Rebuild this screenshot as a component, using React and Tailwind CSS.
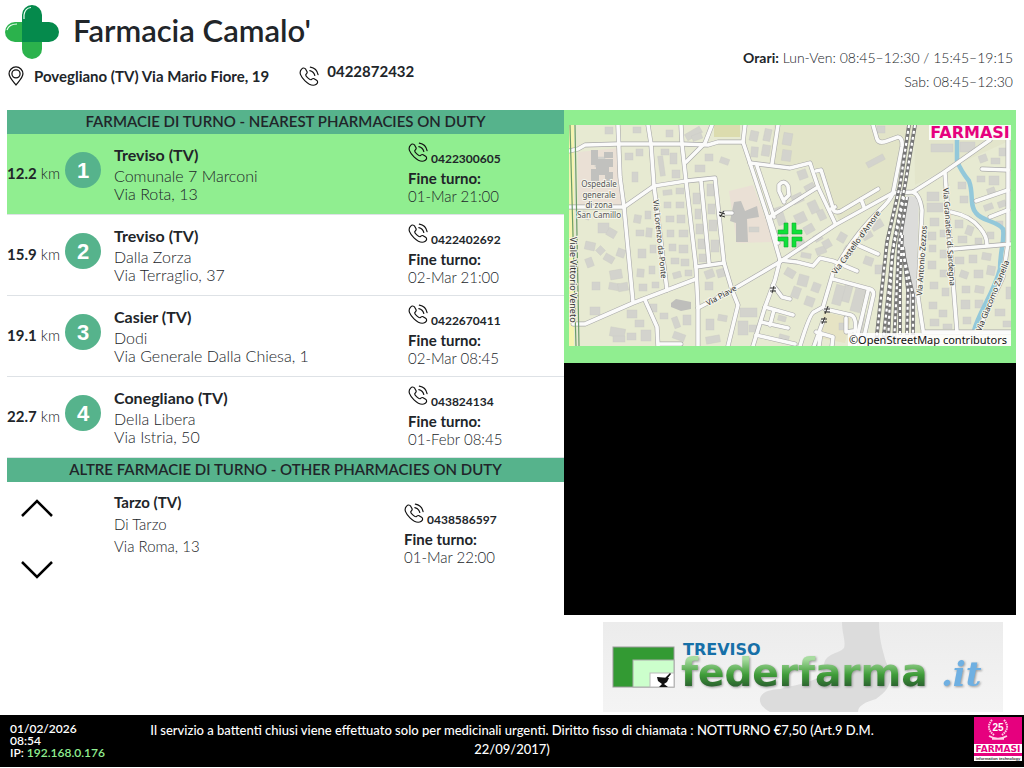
import { useState } from "react";

const nearest = [
  { km: "12.2", city: "Treviso (TV)", name: "Comunale 7 Marconi", street: "Via Rota, 13", phone: "0422300605", until: "01-Mar 21:00" },
  { km: "15.9", city: "Treviso (TV)", name: "Dalla Zorza", street: "Via Terraglio, 37", phone: "0422402692", until: "02-Mar 21:00" },
  { km: "19.1", city: "Casier (TV)", name: "Dodi", street: "Via Generale Dalla Chiesa, 1", phone: "0422670411", until: "02-Mar 08:45" },
  { km: "22.7", city: "Conegliano (TV)", name: "Della Libera", street: "Via Istria, 50", phone: "043824134", until: "01-Febr 08:45" },
];

const others = [
  { city: "Tarzo (TV)", name: "Di Tarzo", street: "Via Roma, 13", phone: "0438586597", until: "01-Mar 22:00" },
];

// Map data, in map units (442 x 221)
const roads = [
  "M0 26L9 24L16 20L49 19H113L139 20L149 17H174",
  "M49 0L51 52L55 82L64 177",
  "M79 0L82 19L85 61L98 165",
  "M112 0L113 19L117 56L127 142L129 183V221",
  "M143 0L136 18L117 37",
  "M4 199H16L64 178L127 154",
  "M0 82H55L85 61L117 56L146 53L155 138L163 165L169 180L159 221",
  "M132 56L140 138",
  "M127 142L155 138",
  "M76 175L88 202L89 221M89 219H112",
  "M176 0L174 17L181 38L199 93L211 135",
  "M181 38L221 43L241 38L249 62L266 98",
  "M209 0L203 39",
  "M188 41L205 92",
  "M199 93L225 77L249 62",
  "M215 77L210 66V60Q215 54 219 61L220 70L216 74",
  "M201 93L209 118",
  "M211 135L206 155L196 182L184 221",
  "M204 160L213 172L221 174",
  "M196 182L224 190M192 197L219 203M205 185L201 200M187 210L226 219",
  "M129 183L163 165L209 138L266 100L324 68L344 67L374 48L421 15",
  "M304 0L308 14Q310 19 318 16L329 12Q334 13 333 22L324 68Q321 76 311 85Q283 112 264 148L254 182L245 187Q241 188 231 221",
  "M211 135L228 137L244 141L251 133L264 136L288 146",
  "M247 46L252 45L265 86Q268 88 272 86L309 64M262 84L266 82M292 74L295 82",
  "M284 118L309 129",
  "M264 154L301 164Q306 166 304 172L293 221M299 166L286 221",
  "M256 184L282 190Q288 192 286 207M277 193V207L284 206M254 196L245 221M247 207L264 212L263 221M252 208L250 221",
  "M344 67Q351 70 353 85L349 172L354 205",
  "M354 207H442",
  "M376 48L381 118L388 207",
  "M382 87Q402 91 411 103Q418 111 418 120",
  "M384 124L442 119",
  "M439 12V118L434 152L408 208",
  "M413 44L439 45M407 76L439 65M421 92L439 85",
  "M155 88H163",
];

const buildings = [
  [26, 32, 10, 10, 0],
  [13, 87, 8, 7, 20], [29, 98, 11, 10, 0], [38, 104, 9, 8, 30], [16, 117, 10, 8, 12], [28, 122, 7, 7, 45],
  [35, 130, 10, 7, 30], [48, 124, 8, 8, 20], [17, 133, 7, 9, -20], [41, 145, 12, 9, -10], [23, 157, 8, 8, 0],
  [40, 158, 10, 7, 10], [49, 158, 10, 8, -10], [21, 182, 10, 8, 0], [41, 203, 15, 9, 10], [44, 211, 12, 6, 0],
  [56, 28, 8, 7, 0], [67, 24, 7, 7, 0], [63, 47, 6, 10, 0], [90, 31, 5, 20, -8], [92, 24, 8, 6, 0], [101, 28, 7, 11, 0],
  [103, 45, 8, 8, 0], [65, 90, 7, 8, 10], [76, 86, 6, 8, 0], [67, 105, 8, 6, 0], [77, 103, 6, 9, 5],
  [69, 124, 8, 9, 0], [81, 120, 6, 8, 0], [68, 144, 7, 8, 5], [80, 141, 6, 8, 0], [70, 159, 8, 7, 0], [83, 157, 7, 6, 0],
  [94, 65, 9, 5, -5], [107, 63, 8, 6, 0], [95, 77, 7, 6, 0], [107, 77, 8, 6, 0], [97, 91, 8, 6, 0], [108, 90, 8, 8, 0],
  [98, 105, 7, 7, 0], [110, 105, 9, 7, 0], [100, 119, 7, 7, 0], [110, 120, 9, 8, 0], [102, 133, 8, 6, 0], [112, 134, 8, 7, 0],
  [104, 147, 8, 6, -15], [116, 145, 7, 6, 0], [124, 68, 7, 11, 0], [126, 84, 6, 10, 0], [127, 99, 7, 10, 0], [129, 114, 7, 10, 0],
  [130, 129, 7, 8, 0], [138, 59, 7, 12, 0], [139, 79, 7, 10, 0], [140, 95, 8, 11, 0], [142, 115, 8, 12, 0],
  [81, 179, 7, 8, 0], [91, 188, 8, 6, 0], [104, 192, 6, 11, -20], [114, 190, 8, 10, 0], [104, 208, 12, 7, 20],
  [58, 185, 10, 8, 0], [66, 195, 9, 7, 0], [72, 205, 10, 11, 0], [58, 208, 9, 7, 0], [136, 145, 9, 8, -20], [148, 144, 8, 8, -15],
  [136, 157, 8, 8, 0], [171, 183, 17, 9, 0], [169, 196, 10, 14, 0], [180, 200, 8, 7, 0], [137, 194, 8, 11, 0], [149, 190, 9, 6, 10],
  [137, 211, 14, 7, -10], [180, 102, 10, 5, 0],
  [116, 5, 17, 7, -30], [123, 9, 10, 6, -20], [36, 2, 8, 7, 0], [64, 2, 8, 6, 0], [97, 5, 7, 7, 0],
  [181, 6, 8, 10, 12], [195, 4, 7, 12, 12], [182, 22, 7, 10, 5], [193, 20, 8, 11, 10], [214, 8, 9, 12, 10], [213, 25, 9, 11, 8],
  [151, 33, 9, 6, 20], [136, 29, 8, 7, 0], [126, 40, 10, 7, 0], [207, 82, 8, 18, -18], [212, 104, 6, 12, -18],
  [229, 45, 9, 9, -20], [236, 59, 10, 8, -28], [223, 69, 11, 9, -25], [240, 76, 9, 12, -25], [226, 88, 11, 10, -25], [249, 85, 7, 10, -25],
  [235, 100, 10, 8, -30], [245, 109, 8, 7, -30], [228, 116, 9, 9, -30], [297, 33, 19, 6, -28], [308, 1, 8, 7, 0],
  [247, 122, 10, 7, -20], [269, 108, 8, 9, 30], [254, 115, 8, 8, -30], [232, 128, 10, 5, 10], [275, 122, 10, 6, 30],
  [274, 160, 8, 17, 15], [284, 162, 10, 25, 15], [265, 160, 9, 20, 15], [290, 190, 4, 24, 10], [270, 198, 6, 7, 0],
  [229, 150, 10, 11, 15], [243, 158, 8, 9, 20], [216, 144, 10, 8, 30], [223, 162, 8, 11, 20], [236, 172, 9, 9, 20], [209, 191, 8, 5, 15],
  [210, 210, 10, 5, 15], [293, 106, 10, 8, -30], [302, 96, 12, 8, -30], [295, 132, 9, 8, 20], [306, 140, 9, 9, 0],
  [362, 19, 22, 8, 0], [391, 17, 15, 10, 0], [367, 7, 8, 7, 0], [358, 67, 12, 9, 0], [358, 78, 16, 9, 0], [361, 93, 9, 8, 0],
  [359, 107, 8, 8, 0], [371, 105, 7, 7, 0], [360, 120, 7, 7, 0], [371, 125, 7, 8, 0], [359, 136, 8, 8, 0], [371, 145, 7, 7, 0],
  [361, 157, 8, 7, 0], [373, 163, 7, 8, 0], [360, 177, 8, 7, 0], [370, 185, 8, 7, 0], [361, 194, 9, 7, 0], [374, 199, 9, 5, 0],
  [389, 57, 8, 7, 0], [391, 71, 8, 7, 0], [386, 95, 8, 8, 0], [397, 101, 7, 9, 20], [389, 111, 9, 7, 0], [406, 113, 7, 6, 0],
  [386, 132, 9, 7, 0], [400, 130, 8, 8, 0], [413, 128, 9, 7, 10], [391, 146, 8, 7, 20], [405, 145, 9, 8, 0], [418, 141, 8, 9, 10],
  [393, 161, 8, 7, 0], [406, 161, 9, 7, 10], [392, 175, 9, 9, 0], [406, 175, 8, 8, 0], [394, 192, 8, 7, 0], [418, 107, 7, 7, 0],
  [410, 30, 8, 7, -20], [422, 33, 9, 6, 0], [408, 51, 8, 6, 0], [420, 51, 10, 9, 0], [418, 63, 8, 5, -20], [415, 79, 9, 6, -20],
  [429, 76, 8, 6, -20], [427, 96, 7, 5, 0], [430, 23, 7, 8, 0], [437, 162, 5, 12, 0], [426, 184, 10, 7, 0], [434, 196, 8, 6, 0],
];

const tracks = [
  "M340 0L331 60L318 117L307 218",
  "M346 0L336 60L325 117L314 218",
  "M335 72L323 130L319 218",
  "M338 72L330 120L325 218",
  "M333 110L331 160L331 210",
  "M334 122L339 165L338 210",
  "M334 128L344 170L344 210",
];

const roadNames = [
  { text: "Via Lorenzo da Ponte", x: 84, y: 75, turn: 84, size: 8 },
  { text: "Viale Vittorio Veneto", x: 1, y: 112, turn: 90, size: 9 },
  { text: "Via Piave", x: 139, y: 181, turn: -29, size: 8 },
  { text: "Via Castello d'Amore", x: 267, y: 150, turn: -54, size: 8 },
  { text: "Via Antonio Zezzos", x: 353, y: 171, turn: -86, size: 8 },
  { text: "Via Granatieri di Sardegna", x: 374, y: 63, turn: 86, size: 8 },
  { text: "Via Giacomo Zanella", x: 412, y: 207, turn: -68, size: 8 },
];

function PhoneIcon() {
  return (
    <svg viewBox="0 0 24 24" className="w-5 h-5 shrink-0" fill="none" stroke="#111" strokeWidth="1.4" strokeLinecap="round" strokeLinejoin="round" aria-hidden="true">
      <path d="M3.1 3.7C4.6 1.9 6.8 2 8 3.8L9.7 6.8C10.5 8.6 8.6 9.3 8.1 10.4C7.6 12 13 17 14.5 16.4C15.7 15.8 16.4 14.3 18.1 15.2L21.1 17.1C23.1 18.5 22.4 20.8 20.8 21.9C17 24.4 12 22.4 7.2 17.8C2.2 13 -.7 7.6 3.1 3.7Z" />
      <path d="M13 5.6Q17.6 6.6 19 11.4M13.6 1.4Q21.4 2.8 22.9 10.4" />
    </svg>
  );
}

function PinIcon() {
  return (
    <svg viewBox="0 0 18 22" className="w-4 h-5 shrink-0" fill="none" stroke="#111" strokeWidth="1.4" aria-hidden="true">
      <path d="M9 21C6.5 17.8 1.2 13 1.2 8.6A7.8 7.8 0 0 1 16.8 8.6C16.8 13 11.5 17.8 9 21Z" />
      <circle cx="9" cy="8.6" r="4.6" />
    </svg>
  );
}

function CrossLogo() {
  return (
    <svg viewBox="0 0 54 54" className="w-[54px] h-[54px] shrink-0" aria-hidden="true">
      <path d="M17 17H10A10 10 0 0 0 10 37H17Z" fill="#2bb24c" />
      <path d="M17 37V44A10 10 0 0 0 37 44V37Z" fill="#2bb24c" />
      <path d="M17 37V10A10 10 0 0 1 37 10V17H44A10 10 0 0 1 44 37Z" fill="#058a4c" />
      <path d="M19 14V10Q20 3 26 2.5" stroke="#e8fff0" strokeWidth="1.2" fill="none" />
      <path d="M2 25Q4 19 12 19" stroke="#e8fff0" strokeWidth="1.2" fill="none" />
    </svg>
  );
}

function StreetMap() {
  return (
    <svg viewBox="0 0 442 221" className="block w-full" role="img" aria-label="Mappa">
      <rect width="442" height="221" fill="#e7ead2" />
      <path d="M205 0H345L327 65L270 95L245 40L200 40Z" fill="#e2e4c8" />
      <path d="M345 0H442V15L376 45L346 60Z" fill="#e3e5cb" />
      <path d="M9 27L50 23L53 80H9Z" fill="#eae0d5" />
      <path d="M160 66L184 60L205 117L168 118Z" fill="#eae0d5" />
      <path d="M145 0H171V12H145Z" fill="#dcdcae" />
      <path d="M338 70L350 73L346 205H344L331 115Z" fill="#dcdcda" />
      <path d="M255 187L282 193L276 218L250 213Z" fill="#e6e3c4" />
      {buildings.map(([x, y, w, h, r], i) => (
        <rect key={i} x={x} y={y} width={w} height={h} fill="#d3d3cd" stroke="#cacac5" strokeWidth=".4" transform={`rotate(${r} ${x + w / 2} ${y + h / 2})`} />
      ))}
      <path d="M22 25H29V34H44V42H40V47H44V56H36V50H30V56H22V44H27V40H22ZM35 27H44V33H35ZM165 77L172 76L176 86L188 81L190 92L178 94L179 117H167V98L161 96Z" fill="#c1c1be" />
      <path d="M102 178L107 174L122 177V184L112 186L102 182Z" fill="#bebebb" />
      <path d="M388 0V36Q392 46 400 56C405 69 400 80 407 88C414 97 427 95 434 104C436 115 431 126 431 144C425 168 409 188 405 206" fill="none" stroke="#93c8da" strokeWidth="4.5" />
      <path d="M0 0H5V221H0Z" fill="#f5f4b0" />
      <g fill="none" strokeLinejoin="round" strokeLinecap="round">
        {roads.map((d) => (
          <path key={d} d={d} stroke="#aaa" strokeWidth="4.8" />
        ))}
        {roads.map((d) => (
          <path key={d} d={d} stroke="#fbfbfa" strokeWidth="3.6" />
        ))}
      </g>
      <path d="M1 0L7 221M6 0L10 221" fill="none" stroke="#6a9c68" strokeWidth="1.2" />
      <g fill="none">
        {tracks.map((d) => (
          <path key={d} d={d} stroke="#777" strokeWidth="3.8" />
        ))}
        {tracks.map((d) => (
          <path key={d} d={d} stroke="#fff" strokeWidth="2.2" strokeDasharray="3 3" />
        ))}
      </g>
      <path d="M150 87L156 89M150 90L156 92M155 86L151 92M201 163L207 163M201 166L207 166M205 161L203 168M255 184L261 184M255 187L261 187M252 194L258 194M252 197L258 197M259 181L256 189M256 192L253 199" stroke="#333" strokeWidth="1" />
      <g fontFamily="'Noto Sans', sans-serif" fill="#333" stroke="#f5f5ec" strokeWidth="2" paintOrder="stroke">
        {roadNames.map((n) => (
          <text key={n.text} fontSize={n.size} transform={`translate(${n.x} ${n.y}) rotate(${n.turn})`}>
            {n.text}
          </text>
        ))}
        <g fontSize="8" textAnchor="middle" fill="#555">
          <text x="30" y="62">Ospedale</text>
          <text x="30" y="73">generale</text>
          <text x="30" y="83">di zona</text>
          <text x="30" y="93">San Camillo</text>
        </g>
      </g>
      <g fill="#10e038" stroke="#14a834" strokeWidth=".6">
        <path d="M215 98H219V109H209V105H215Z" />
        <path d="M223 98H227V105H233V109H223Z" />
        <path d="M209 112H219V122H215V116H209Z" />
        <path d="M223 112H233V116H227V122H223Z" />
      </g>
      <rect x="360" width="82" height="15" fill="#fff" opacity=".85" />
      <text x="401" y="13" textAnchor="middle" fontFamily="'DejaVu Sans', sans-serif" fontWeight="700" fontSize="16" fill="#e6007e">FARMASI</text>
      <rect x="279" y="208" width="163" height="13" fill="#fff" opacity=".85" />
      <text x="438" y="219" textAnchor="end" fontFamily="'Noto Sans', sans-serif" fontSize="11" fill="#111">©OpenStreetMap contributors</text>
    </svg>
  );
}

function FederfarmaBanner() {
  return (
    <svg viewBox="0 0 400 90" className="block w-[400px] max-w-full" role="img" aria-label="Federfarma Treviso">
      <defs>
        <linearGradient id="panel" x1="0" y1="0" x2="0" y2="1">
          <stop offset="0" stopColor="#ececec" />
          <stop offset="1" stopColor="#f4f4f4" />
        </linearGradient>
        <linearGradient id="brand" x1="0" y1="0" x2="0" y2="1">
          <stop offset=".2" stopColor="#a8dca0" />
          <stop offset=".55" stopColor="#3f9c38" />
          <stop offset=".8" stopColor="#2c6530" />
        </linearGradient>
      </defs>
      <rect width="400" height="90" fill="url(#panel)" />
      <path d="M239 0C239 12 243 19 241 26C236 32 222 31 221 43C222 60 199 61 177 67C151 68 153 83 167 90H255C255 84 262 80 273 77C289 66 291 55 283 40C279 26 276 16 276 0Z" fill="#dcdcdc" />
      <rect x="10" y="25" width="61" height="40" fill="#339a33" stroke="#999" />
      <rect x="30" y="38" width="41" height="27" fill="#ccffcc" stroke="#aaa" />
      <rect x="47" y="51" width="24" height="14" fill="#fff" stroke="#bbb" />
      <path d="M54 55L66 56L64 60L61 62L65 65H56L59 62L55 59ZM62 56L67 51L68 52L64 57Z" fill="#111" />
      <text x="80" y="33" fontFamily="'DejaVu Sans', sans-serif" fontWeight="700" fontSize="16" fill="#1770a8">TREVISO</text>
      <g className="drop-shadow-[1px_1px_1px_#999]">
        <text x="78" y="64" fontFamily="'DejaVu Sans', sans-serif" fontWeight="700" fontSize="39" fill="url(#brand)">federfarma</text>
        <text x="338" y="64" fontFamily="'DejaVu Serif', serif" fontStyle="italic" fontWeight="700" fontSize="34" fill="#6fb0e2">.it</text>
      </g>
    </svg>
  );
}

function FarmasiBadge() {
  return (
    <svg viewBox="0 0 48 44" className="w-12 h-11 shrink-0" role="img" aria-label="Farmasi">
      <rect width="48" height="44" fill="#e6007e" />
      <text x="24" y="14" textAnchor="middle" fontFamily="'Liberation Sans', sans-serif" fontSize="10" fill="#fff">25</text>
      <path d="M18 3Q11 11 20 18M30 3Q37 11 28 18" fill="none" stroke="#ffd0e8" strokeWidth="2" strokeDasharray="1.5 .8" />
      <path d="M15 19Q24 24 33 19M18 22H30" fill="none" stroke="#ffd0e8" strokeWidth="1.6" />
      <rect y="27" width="48" height="9" fill="#fff" />
      <text x="24" y="35" textAnchor="middle" fontFamily="'DejaVu Sans', sans-serif" fontWeight="700" fontSize="9" fill="#e6007e">FARMASI</text>
      <rect y="39" width="48" height="5" fill="#fff" />
      <text x="24" y="43" textAnchor="middle" fontFamily="'Liberation Sans', sans-serif" fontSize="4" fill="#333">information technology</text>
    </svg>
  );
}

function ShiftInfo({ phone, until }) {
  return (
    <>
      <a href={`tel:${phone}`} className="flex items-end gap-[3px] h-[27px] pb-[2px] font-bold text-[12px] leading-4">
        <span className="self-start">
          <PhoneIcon />
        </span>
        {phone}
      </a>
      <p className="font-bold leading-[18px]">Fine turno:</p>
      <p className="font-light leading-[18px]">{until}</p>
    </>
  );
}

function SectionTitle({ children }) {
  return <h2 className="bg-[#56b38c] text-center font-semibold leading-[22px] pb-[2px] text-[15px]">{children}</h2>;
}

function App() {
  const [index, setIndex] = useState(0);
  const other = others[index];

  const move = (step) => {
    setIndex((index + step + others.length) % others.length);
  };

  return (
    <div className="min-h-screen bg-white text-[#212529] text-[15px] font-[Lato,sans-serif] flex flex-col">
      {/* Header */}
      <header className="flex justify-between pl-[5px] pr-[11px] pt-[5px] h-[110px]">
        <div>
          <div className="flex items-center gap-[14px]">
            <CrossLogo />
            <h1 className="text-[31px] leading-9 pb-1 font-semibold">Farmacia Camalo'</h1>
          </div>
          <div className="flex items-center gap-[30px] pl-[3px] pt-[6px] font-bold">
            <address className="not-italic flex items-center gap-[10px]">
              <PinIcon />
              Povegliano (TV) Via Mario Fiore, 19
            </address>
            <a href="tel:0422872432" className="flex gap-2 leading-[10px]">
              <PhoneIcon />
              0422872432
            </a>
          </div>
        </div>
        <div className="text-right text-[14px] font-light leading-6 pt-[41px]">
          <p><strong className="font-bold">Orari:</strong> Lun-Ven: 08:45–12:30 / 15:45–19:15</p>
          <p>Sab: 08:45–12:30</p>
        </div>
      </header>

      <main className="grid grid-cols-[557fr_452fr] pl-[7px] pr-2 grow items-start">
        {/* Pharmacies */}
        <div>
          <SectionTitle>FARMACIE DI TURNO - NEAREST PHARMACIES ON DUTY</SectionTitle>
          <table className="w-full table-fixed border-separate border-spacing-0">
            <colgroup>
              <col className="w-[58px]" />
              <col className="w-[49px]" />
              <col />
              <col className="w-[156px]" />
            </colgroup>
            <tbody>
              {nearest.map((p, i) => (
                <tr key={p.phone} className={`h-[81px] *:border-b *:border-[#dee2e6] ${i === 0 ? "bg-[#90ee90]" : "bg-white"}`}>
                  <td className="font-light whitespace-nowrap pb-[2px]"><b className="font-bold">{p.km}</b> km</td>
                  <td className="align-top pt-[18px]">
                    <span className="w-9 h-9 rounded-full bg-[#56b38c] text-white font-bold text-[22px] font-[Liberation_Sans,sans-serif] flex items-center justify-center">{i + 1}</span>
                  </td>
                  <td className="align-top pt-[9px] text-[16px] font-light leading-[18px]">
                    <p className="font-bold leading-6">{p.city}</p>
                    <p>{p.name}</p>
                    <p>{p.street}</p>
                  </td>
                  <td className="align-top pt-2">
                    <ShiftInfo phone={p.phone} until={p.until} />
                  </td>
                </tr>
              ))}
            </tbody>
          </table>

          <SectionTitle>ALTRE FARMACIE DI TURNO - OTHER PHARMACIES ON DUTY</SectionTitle>
          <div className="flex">
            <div className="w-[107px] shrink-0 pl-[14px] pt-[17px] flex flex-col gap-11">
              <button type="button" aria-label="Precedente" className="w-8 cursor-pointer" onClick={() => move(-1)}>
                <svg viewBox="0 0 32 18" className="block" fill="none" stroke="#000" strokeWidth="2.5">
                  <path d="M1 17L16 2L31 17" />
                </svg>
              </button>
              <button type="button" aria-label="Successiva" className="w-8 cursor-pointer" onClick={() => move(1)}>
                <svg viewBox="0 0 32 18" className="block" fill="none" stroke="#000" strokeWidth="2.5">
                  <path d="M1 1L16 16L31 1" />
                </svg>
              </button>
            </div>
            <div className="grow pt-[9px] font-light leading-[22px]">
              <p className="font-bold">{other.city}</p>
              <p>{other.name}</p>
              <p>{other.street}</p>
            </div>
            <div className="w-40 shrink-0 pt-[21px]">
              <ShiftInfo phone={other.phone} until={other.until} />
            </div>
          </div>
        </div>

        {/* Map and banners */}
        <div>
          <div className="bg-[#90ee90] pl-[5px] pr-[5px] pt-[15px] pb-[17px]">
            <StreetMap />
          </div>
          <div className="bg-black h-[252px]"></div>
          <div className="flex justify-end pr-[13px] pt-[7px]">
            <FederfarmaBanner />
          </div>
        </div>
      </main>

      {/* Footer */}
      <footer className="bg-black text-white font-semibold flex justify-between pl-[10px] pr-[2px] h-[52px] mb-px">
        <div className="w-[112px] pt-2 text-[12px] leading-3">
          <p>01/02/2026</p>
          <p>08:54</p>
          <p>IP: <span className="text-[#90ee90]">192.168.0.176</span></p>
        </div>
        <p className="max-w-[740px] text-[13px] font-medium text-center leading-[19px] pt-[6px]">
          Il servizio a battenti chiusi viene effettuato solo per medicinali urgenti. Diritto fisso di chiamata : NOTTURNO €7,50 (Art.9 D.M. 22/09/2017)
        </p>
        <div className="w-[120px] flex justify-end pt-[2px]">
          <FarmasiBadge />
        </div>
      </footer>
    </div>
  );
}

export default App;
